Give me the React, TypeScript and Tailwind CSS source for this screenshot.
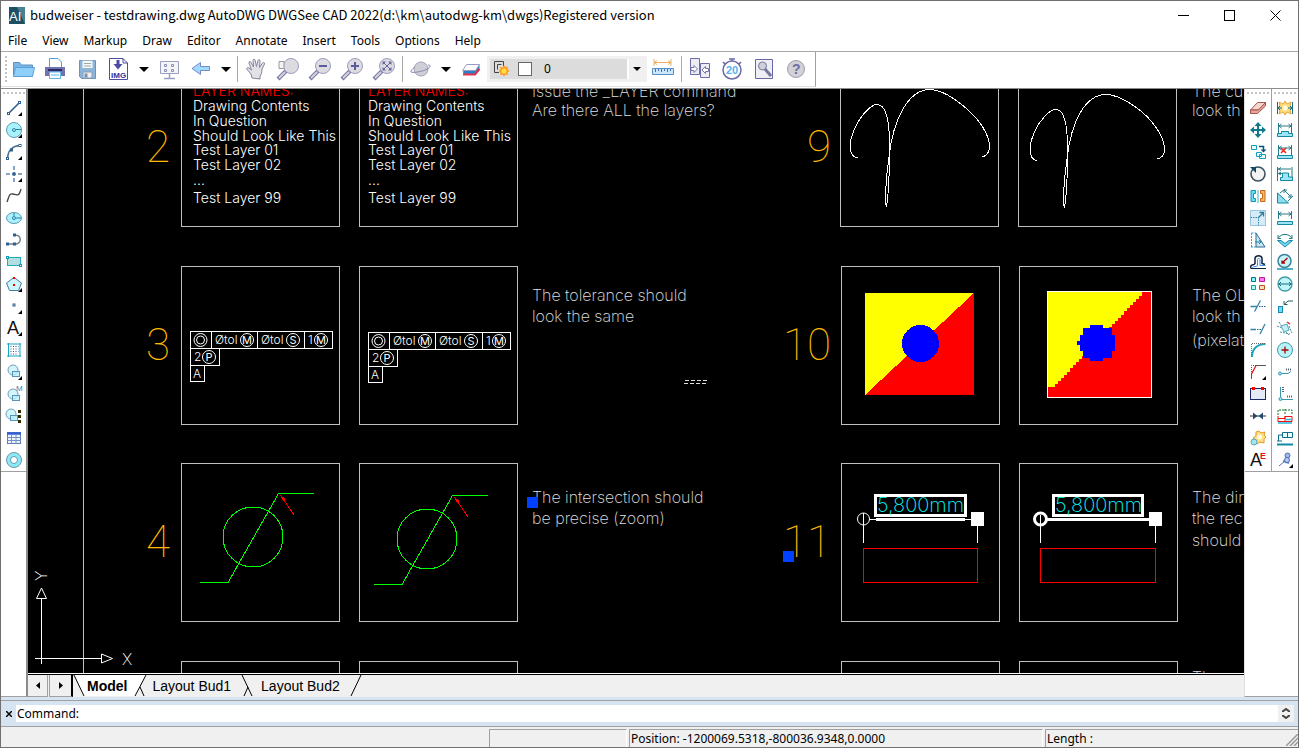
import React from 'react';

interface Tool {
  name: string;
  icon: React.ReactNode;
}

const Corner = () => <path d="M18 14v4h-4z" fill="#000" />;

const Node = ({ x, y }: { x: number; y: number }) => (
  <rect x={x - 1} y={y - 1} width="2" height="2" fill="#fff" stroke="#2f6090" />
);

const Shapes = () => (
  <>
    <circle cx="9" cy="8" r="5" fill="#d2f4fb" stroke="#6f9fbe" />
    <rect x="8.500" y="9.500" width="7" height="5" fill="#b9f0fb" fillOpacity=".8" stroke="#5b93b8" />
  </>
);

const drawTools: Tool[] = [
  { name: 'Line', icon: <><path d="M5 15L15 5" stroke="#2f6090" strokeWidth="1.6" /><Node x={4.5} y={15.5} /><Node x={15.5} y={4.5} /><Corner /></> },
  { name: 'Circle', icon: <><circle cx="10" cy="10" r="7.500" fill="#a8f2ff" stroke="#5f9db5" /><circle cx="10" cy="10" r="1.500" stroke="#2f7fa0" /><path d="M12 9.500h5" stroke="#2f7fa0" /><Corner /></> },
  { name: 'Arc', icon: <><path d="M3.500 16C4 9 8 4 16 3.500" stroke="#52728c" strokeWidth="1.5" /><Node x={3.5} y={16.5} /><Node x={7.5} y={8} /><Node x={16} y={3.5} /><Corner /></> },
  { name: 'Construction point', icon: <><path d="M10 2v16M2 10h16" stroke="#5b87b5" strokeWidth="1.5" strokeDasharray="4 2" /><rect x="8.500" y="8.500" width="3" height="3" fill="#2f6090" /><Corner /></> },
  { name: 'Spline', icon: <path d="M3 16C5 11 5 7 9 8s6 3 8-5" stroke="#444" strokeWidth="1.3" /> },
  { name: 'Ellipse', icon: <><ellipse cx="10" cy="10" rx="7.500" ry="5.500" fill="#a8f2ff" stroke="#5f9db5" /><circle cx="10" cy="10" r="1.500" stroke="#2f7fa0" /><path d="M10 5v3M12 10h5" stroke="#2f7fa0" /></> },
  { name: 'Polyline', icon: <><path d="M3 14h8c7 0 7-9 0-9" stroke="#6d7f8f" strokeWidth="1.5" /><Node x={3.5} y={14} /><Node x={10.5} y={14} /><Node x={10.5} y={5} /></> },
  { name: 'Rectangle', icon: <><rect x="3.500" y="5.500" width="13" height="8" fill="#b4dde2" stroke="#21aabf" /><rect x="2.500" y="4.500" width="2" height="2" fill="#fff" stroke="#0a9cb4" /><rect x="15.500" y="12.500" width="2" height="2" fill="#fff" stroke="#0a9cb4" /></> },
  { name: 'Polygon', icon: <><path d="M10 3.500l7.500 5.500-3 7.500h-9L2.500 9z" fill="#cdf5fb" stroke="#3b7fa3" /><path d="M9 3h2v2H9zM9 10h2v2H9z" fill="#f00" /><Corner /></> },
  { name: 'Point', icon: <><rect x="9" y="8" width="2" height="2" stroke="#2f6090" /><Corner /></> },
  { name: 'Text', icon: <><text x="3" y="16" fill="#111" fontSize="18" className="font-['Liberation_Sans']">A</text><Corner /></> },
  { name: 'Hatch', icon: <><path d="M3 4h14M3 16h14M4.500 3v14M16 3v14" stroke="#18a5bd" /><path d="M6.500 6.500h8M6.500 9h8M6.500 11.500h8M6.500 14h6" stroke="#1c5d9c" strokeDasharray="1 1.500" /></> },
  { name: 'Block', icon: <><Shapes /><Corner /></> },
  { name: 'Make block', icon: <><g transform="translate(0 2)"><Shapes /></g><text x="12" y="7" fill="#3c7fb0" fontSize="8" className="font-['Liberation_Sans']">M</text></> },
  { name: 'Block list', icon: <><g transform="translate(-2 0)"><Shapes /></g><path d="M14 4h3v3h-3zM14 9h3v3h-3zM14 14h3v3h-3z" fill="#332b00" /></> },
  { name: 'Table', icon: <><rect x="3.500" y="4.500" width="13" height="11" fill="#edf4ff" stroke="#5b79b8" /><path d="M3 5.500h14" stroke="#2f5fd0" strokeWidth="2.500" /><path d="M3 9.500h14M3 12.500h14M7.500 6v10M12 6v10" stroke="#7590c4" /></> },
  { name: 'Donut', icon: <><circle cx="10" cy="10" r="7.500" fill="#8ceaf8" stroke="#6799ae" /><circle cx="10" cy="10" r="3.500" fill="#fff" stroke="#6799ae" /></> },
];

const modifyTools: Tool[] = [
  { name: 'Erase', icon: <><path d="M2.500 12l7-7.500h8l-7 7.500z" fill="#f6d5cf" stroke="#a7574d" /><path d="M2.500 12v3.500h7l8-7.500V4.500l-7 7.500z" fill="#e6a59b" stroke="#a7574d" /></> },
  { name: 'Move', icon: <><path d="M10 4v12M4 10h12" stroke="#0f7a8c" strokeWidth="2" /><path d="M10 2l3.500 4h-7zM10 18l3.500-4h-7zM2 10l4-3.500v7zM18 10l-4-3.500v7z" fill="#0f7a8c" /></> },
  { name: 'Copy', icon: <><path d="M3.500 3.500h5v4h-5zM8.500 10.500h5v4h-5zM11.500 12.500h6v4h-6z" fill="#f0ffff" stroke="#11a2c0" /><path d="M11 4.500h4.500V8" stroke="#0d5472" strokeWidth="1.500" /><path d="M12.500 7.500h6l-3 3z" fill="#0d5472" /></> },
  { name: 'Rotate', icon: <><circle cx="10" cy="10" r="7" fill="#f3f3f3" stroke="#3c5262" strokeWidth="1.6" /><path d="M2 3h6v6z" fill="#0d4a60" /></> },
  { name: 'Mirror', icon: <><path d="M3 4.500h4.500v3h-2v5h2v3H3z" fill="#6adcf5" stroke="#1697b8" /><path d="M17 4.500h-4.500v3h2v5h-2v3H17z" fill="#ffb36a" stroke="#c56a14" /><path d="M10 4v13" stroke="#33b6c9" /></> },
  { name: 'Scale', icon: <><rect x="2.500" y="2.500" width="15" height="15" fill="#d7eaf8" stroke="#9cc4dd" /><path d="M2.500 9.500h8v8" stroke="#3c87a8" strokeDasharray="1.500 1" /><path d="M10 10l5-5M11.500 4.500h4v4" stroke="#287f9d" strokeWidth="1.300" /></> },
  { name: 'Stretch', icon: <><path d="M8 3l9 14H8z" fill="#c9e7f5" stroke="#2c6a92" /><path d="M3.500 3H8M3 17h6M3.500 3v14" stroke="#3a9dc0" strokeDasharray="2 1" /><path d="M7 12h5M11 10l2 2-2 2" stroke="#1f8aa5" /></> },
  { name: 'Offset', icon: <><path d="M3 16.500c-1-2 0-4 3-4l1-1V6c1-3 6-3 7 0v5.500l3 1" stroke="#11203a" strokeWidth="1.500" /><path d="M17.500 16.500H5c-1-1.500 0-2 3.500-2l1-1.500V7.500c.5-1.500 2-1.500 2.500 0v6h5.500" stroke="#3b8bf0" /><path d="M3 16.500h15" stroke="#11203a" /></> },
  { name: 'Array', icon: <><path d="M3.500 3.500h4v4h-4z" fill="#7ff" stroke="#0d6b94" /><path d="M11.500 3.500h5v4h-5z" fill="#f7f" stroke="#b3208b" /><path d="M3.500 11.500h4v4h-4z" fill="#aff" stroke="#0d9b94" /><path d="M11.500 11.500h5v4h-5z" fill="#fdb" stroke="#b35a20" /></> },
  { name: 'Trim', icon: <><path d="M2.500 10.500H9M6.500 15.500l6-11" stroke="#2d86a8" strokeWidth="1.300" /><path d="M11 10.500h7" stroke="#2f5f8a" strokeDasharray="1.500 1" /></> },
  { name: 'Extend', icon: <><path d="M2.500 11.500H8M12 16l5-10" stroke="#2d86a8" strokeWidth="1.300" /><path d="M9 11.500h5" stroke="#2f5f8a" strokeDasharray="1.500 1" /></> },
  { name: 'Fillet', icon: <><path d="M4 17C4 9 9 4 17.500 4" stroke="#22a5bf" strokeWidth="2" /><path d="M3.500 17V3.500H17" stroke="#666" strokeDasharray="1 1" /></> },
  { name: 'Chamfer', icon: <><path d="M3.500 17v-6M8 3.500h10" stroke="#555" /><path d="M3.500 10V3.500H8" stroke="#555" strokeDasharray="1 1" /><path d="M3.500 12L8 3.500" stroke="#e11" strokeWidth="1.300" /><Corner /></> },
  { name: 'Break', icon: <><rect x="2.500" y="4.500" width="15" height="11" fill="#e4ebf7" stroke="#1b2a66" /><path d="M4 3h3v3H4zM13 3h3v3h-3z" fill="#f00" /></> },
  { name: 'Join', icon: <><path d="M2 10h16" stroke="#333" /><path d="M5 6.500l4.500 3.500L5 13.500zM15 6.500L10.500 10l4.500 3.500z" fill="#27496b" /></> },
  { name: 'Explode', icon: <><path d="M11 3l2 2 4-1-1 3 2 2-2 2 0 4-4-1-3 2-1-4-3-2 3-2 0-4z" fill="#ffdf87" stroke="#e09a28" /><circle cx="11.500" cy="9" r="2.500" fill="#fffbe0" /><circle cx="6" cy="14" r="3" fill="#a4e3ea" stroke="#5ba9b8" /></> },
  { name: 'Edit text', icon: <><text x="2" y="16" fill="#111" fontSize="18" className="font-['Liberation_Sans']">A</text><text x="12" y="9" fill="#e11" fontSize="9" className="font-['Liberation_Sans'] font-bold">E</text></> },
];

const Ends = () => (
  <path d="M3.500 3v13M16.500 3v13M4 6h12M6.500 4L4 6l2.500 2M13.500 4L16 6l-2.500 2" stroke="#247b86" />
);

const Bar = () => <path d="M2.500 13.500h15v3h-15z" fill="#9ce6f5" stroke="#1587a3" />;

const dimensionTools: Tool[] = [
  { name: 'Quick dimension', icon: <><path d="M10 3l2 3 4-2-1 4 3 2-3 2 1 4-4-2-2 3-2-3-4 2 1-4-3-2 3-2-1-4 4 2z" fill="#ffdc7d" stroke="#e6a437" /><circle cx="10" cy="10" r="2.500" fill="#fffbe0" /><path d="M2.500 4v12M17.500 4v12M3 10h4M13 10h4M5 8l-2 2 2 2M15 8l2 2-2 2" stroke="#126f85" /></> },
  { name: 'Linear dimension', icon: <><Ends /><path d="M2.500 13.500h4v-2h7v2h4v3h-15z" fill="#9ce6f5" stroke="#1587a3" /></> },
  { name: 'Remove dimension', icon: <><Ends /><Bar /><path d="M6 6l5 5M11 6l-5 5" stroke="#e22" strokeWidth="1.500" /></> },
  { name: 'Baseline dimension', icon: <><path d="M2.500 3v14M17 3v12M3 5h13M3 9.500h8M6 8L3.500 9.500 6 11M6 3.500L3.500 5 6 6.500" stroke="#247b86" /><path d="M7.500 11v-2h6v4h4v3.500h-12v-3h2z" fill="#9ce6f5" stroke="#1587a3" /></> },
  { name: 'Aligned dimension', icon: <><path d="M2.500 7v10h11z" fill="#8ddcf0" stroke="#1587a3" /><path d="M5 7l5-4M13 15l5-5M9 4l7 7M9 7V4h3M13 11h3V8" stroke="#247b86" /></> },
  { name: 'Span dimension', icon: <><path d="M3.500 3v8M16.500 3v8M4 6h12M6.500 4L4 6l2.500 2M13.500 4L16 6l-2.500 2" stroke="#247b86" /><Bar /></> },
  { name: 'Angular dimension', icon: <><path d="M2.500 10.500h3.500l4 3 4-3h3.500L10 17z" fill="#6fdcf3" stroke="#1587a3" /><path d="M3 8.500C6 3 14 3 17 8.500M3 5v3.500h3M17 5v3.500h-3" stroke="#247b86" /></> },
  { name: 'Radius', icon: <><circle cx="9.500" cy="9" r="6.500" fill="#c9f4fa" stroke="#3d8298" strokeWidth="1.500" /><path d="M12.500 6L7 11M7 8.500V11h3" stroke="#a00" strokeWidth="1.300" /><path d="M2 17h16" stroke="#1697b8" strokeWidth="1.500" /></> },
  { name: 'Diameter', icon: <><circle cx="10" cy="10" r="7" fill="#c0f4f7" stroke="#429aa8" strokeWidth="1.300" /><path d="M3 10h14M6 8l-2 2 2 2M14 8l2 2-2 2" stroke="#156f83" /></> },
  { name: 'Ordinate', icon: <><rect x="3.500" y="10.500" width="4" height="6" fill="#72dffa" stroke="#138ab0" /><path d="M9 8.500l4-3.500h5M9 5v3.500h3.500" stroke="#245c66" /></> },
  { name: 'Jogged', icon: <><path d="M2 8l5 2M5 14l10 2M4 4l3 5M11 14l3 3M14 8l3 7" stroke="#4790a5" strokeDasharray="2 1" /><path d="M6 8l6-2 2 6-5 2z" fill="#c5eef5" stroke="#5ba9b8" /><path d="M12 4l3 2" stroke="#e22" strokeWidth="1.500" /></> },
  { name: 'Center mark', icon: <><circle cx="10" cy="10" r="7.500" fill="#b5f5fa" stroke="#4796a8" /><path d="M10 6.500v7M6.500 10h7" stroke="#a00" strokeWidth="1.300" /></> },
  { name: 'Leader', icon: <><circle cx="5" cy="11.500" r="1.500" fill="#9ce6f5" stroke="#3796ad" /><path d="M7 11.500h6l3-2" stroke="#3796ad" /><path d="M11 7.500h6" stroke="#567" strokeDasharray="1 1" strokeWidth="2" /></> },
  { name: 'Ordinate leader', icon: <><path d="M5.500 3v10M7 15.500h11" stroke="#3796ad" /><circle cx="5.500" cy="15" r="1.500" fill="#9ce6f5" stroke="#3796ad" /><path d="M8 3v6M12 12.500h6" stroke="#567" strokeDasharray="1 1" strokeWidth="2" /></> },
  { name: 'Tolerance', icon: <><path d="M3 9V4h14v5M10 3v6" stroke="#177a2a" strokeDasharray="2 1" /><path d="M3 12.500h7v-2h7v5M3 10v6M10 10v6M3 15.500h14" stroke="#e11" /><path d="M3 17h14M11 13.500h6" stroke="#26b6db" strokeWidth="1.500" /></> },
  { name: 'Edit dimension', icon: <><path d="M7.500 4.500h10v5h-10zM12.500 4.500v5M7 7H3.500v6M2 13h5" fill="#e8ffff" stroke="#0f6d85" /><path d="M2 16.500h16" stroke="#0f8aa5" strokeWidth="2" /></> },
  { name: 'Dimension style', icon: <><path d="M4 16l6-5" stroke="#5c79b9" /><path d="M8 11l6 2" stroke="#6483c5" strokeWidth="2" /><circle cx="12.500" cy="5.500" r="2.500" fill="#9db7ee" stroke="#4f6db4" /><circle cx="12" cy="10" r="2.500" fill="#b9cdf4" stroke="#4f6db4" /><Corner /></> },
];

const ToolColumn = ({ label, tools, width }: { label: string; tools: Tool[]; width: string }) => (
  <div role="toolbar" aria-label={label} className={`flex flex-col items-center border-b border-[#a0a0a0] bg-white ${width}`}>
    <div className="my-[3px] h-0 w-[22px] border-t-2 border-dotted border-[#c4c4c4]" />
    {tools.map((tool) => (
      <button key={tool.name} aria-label={tool.name} className="flex h-[22px] w-6 items-center justify-center">
        <svg width="20" height="20" viewBox="0 0 20 20" fill="none">{tool.icon}</svg>
      </button>
    ))}
  </div>
);

const MainTool = ({ label, children }: { label: string; children: React.ReactNode }) => (
  <button aria-label={label} className="flex w-8 shrink-0 items-center justify-center">
    <svg width="24" height="24" viewBox="0 0 24 24" fill="none">{children}</svg>
  </button>
);

const Drop = ({ label }: { label: string }) => (
  <button aria-label={label} className="flex w-[18px] shrink-0 items-center justify-center">
    <svg width="10" height="5" viewBox="0 0 10 5"><path d="M0 0h10L5 5z" /></svg>
  </button>
);

const Divider = () => <div className="mx-[2px] my-1 w-px shrink-0 bg-[#a8a8a8]" />;

const Lens = () => (
  <>
    <path d="M2 22l8-8" stroke="#7a7aa8" strokeWidth="4" />
    <path d="M3 21l6-6" stroke="#d4d4e4" strokeWidth="2" />
    <circle cx="15" cy="9" r="7.500" fill="#dcdce0" stroke="#9c9cc0" />
  </>
);

const MainToolbar = () => (
  <div className="flex h-[37px] shrink-0 border-b border-[#8c8c8c] bg-white">
    <div role="toolbar" aria-label="Standard" className="flex h-[35px] border-r border-b border-[#a0a0a0] border-b-[#e0e0e0] pr-[3px]">
      <div className="my-1 ml-1 w-0 border-l-2 border-dotted border-[#c4c4c4]" />
      <MainTool label="Open">
        <path d="M2.500 19V5.500h6l2 2.500h11v11z" fill="#79b5e6" stroke="#5c93c4" />
        <path d="M2.500 19.500l2-9h19l-2 9z" fill="#8fd0fa" stroke="#5d9fd2" />
      </MainTool>
      <MainTool label="Print">
        <path d="M6.500 11V1.500H15l3.500 3.500v6" fill="#fff" stroke="#4da2dd" />
        <path d="M2 10h20v9H2z" fill="#6f73ae" />
        <path d="M5 13h14" stroke="#2c2d66" strokeWidth="2" />
        <path d="M6.500 15h11v6.500h-11z" fill="#fff" stroke="#5fb5e8" />
        <path d="M8 18h8" stroke="#5fb5e8" />
      </MainTool>
      <MainTool label="Save">
        <path d="M4.500 3.500h16v18h-14l-2-2z" fill="#8bb4dc" stroke="#6b92bb" />
        <path d="M7 3.500h11v8H7z" fill="#f4f8fb" stroke="#9db5cb" />
        <path d="M9 6.500h7M9 9h7" stroke="#9aa" />
        <path d="M8 15h9v6H8z" fill="#efefef" stroke="#8b9db0" />
        <path d="M9.500 16.500h3v4h-3z" fill="#7a94b0" />
      </MainTool>
      <MainTool label="Save as image">
        <path d="M2.500 1.500H16l4.500 4.500v16.500h-18z" fill="#fff" stroke="#4d4da0" />
        <path d="M16 1.500V6h4.500" stroke="#4d4da0" />
        <path d="M11 3v5" stroke="#4d4da0" strokeWidth="3" />
        <path d="M6.500 7h9L11 12.500z" fill="#4d4da0" />
        <text x="4" y="21" fill="#30309a" fontSize="8" className="font-['Liberation_Sans'] font-bold">IMG</text>
      </MainTool>
      <Drop label="Save options" />
      <MainTool label="Full screen">
        <path d="M3.500 4.500h18v12h-18z" fill="#f5f5f8" stroke="#9aa0bf" />
        <path d="M7.500 7.500h2v2h-2zM14.500 7.500h2v2h-2zM7.500 12.500h2v2h-2zM14.500 12.500h2v2h-2z" stroke="#8a90b3" />
        <path d="M12.500 17v4M7 21.500h11" stroke="#9aa0bf" strokeWidth="1.500" />
      </MainTool>
      <MainTool label="Back"><path d="M3 11.500L11.500 5.500v4h9v4h-9v4z" fill="#9fd9fb" stroke="#7589c9" /></MainTool>
      <Drop label="View history" />
      <Divider />
      <MainTool label="Pan">
        <path d="M8 21l-1-4-4-4.500c-1-1.500 1-2.500 2-1.500L7.500 13 5 6c-.500-1.700 1.500-2 2-.700L9.500 10 9 3.500c0-1.700 2-1.700 2.200 0L12.500 9.500 14 3.500c.500-1.500 2.300-1 2 .5L15.500 10.500 18.500 6c1-1.300 2.500-.3 2 1L18 12c0 4-1 6-2 7v3z" fill="#e2e2e6" stroke="#83839f" />
      </MainTool>
      <MainTool label="Zoom window"><Lens /><path d="M3 4.500h5v7H3z" fill="#f3f3f3" stroke="#999" /></MainTool>
      <MainTool label="Zoom out"><Lens /><path d="M11 9h8" stroke="#5c5c9c" strokeWidth="2" /></MainTool>
      <MainTool label="Zoom in"><Lens /><path d="M11 9h8M15 5v8" stroke="#5c5c9c" strokeWidth="2" /></MainTool>
      <MainTool label="Zoom extents">
        <Lens />
        <path d="M11.500 5.500l7 7M18.500 5.500l-7 7" stroke="#6464a0" />
        <path d="M10.500 8V4.500H14zM19.500 8V4.500H16zM10.500 10v3.500H14zM19.500 10v3.500H16z" fill="#6464a0" />
      </MainTool>
      <Divider />
      <MainTool label="Orbit">
        <circle cx="12" cy="12" r="7" fill="#cfcfd8" stroke="#a3a3b8" />
        <path d="M6 10c-3 2-4.500 4-4 5s12 0 17-3.500c3-2 3-3.500 0-3.500" stroke="#8989ac" />
      </MainTool>
      <Drop label="Orbit options" />
      <MainTool label="Eraser">
        <path d="M4 15l4-7h12.500v5l-4 5H5z" fill="#2d7fc5" />
        <path d="M4 17.500h12l4.500-5.500" stroke="#e0344c" strokeWidth="2" />
        <path d="M3.500 13.500l4-6h13l-4 6z" fill="#fff" stroke="#9c9cc0" />
      </MainTool>
      <div className="relative my-1 w-[160px] shrink-0 border-[3px] border-[#f0f0f0] bg-[#dcdcdc]">
        <select aria-label="Layer" className="h-full w-full appearance-none pl-[54px] text-xs outline-none" defaultValue="0">
          <option value="0">0</option>
        </select>
        <div className="pointer-events-none absolute inset-0 flex items-center gap-2 pl-1">
          <svg width="16" height="18" viewBox="0 0 16 18" fill="none">
            <path d="M.5 12.500V1.500h9v5M3.500 9.500v-5h4" stroke="#444" />
            <path d="M.5 12.500H5" stroke="#444" />
            <path d="M10 5l1.500 2 2.500-.5-.5 2.500 2 2-2 1.500.5 2.500-2.500-.5L10 16.500 8.500 14.500 6 15l.5-2.500L4.500 11l2-1.500L6 7l2.500.5z" fill="#ff9b21" />
            <circle cx="10" cy="11" r="2.500" fill="#ffe23d" />
          </svg>
          <span className="h-[14px] w-[14px] border border-[#666] bg-white" />
        </div>
        <div className="pointer-events-none absolute inset-y-0 right-0 flex w-[17px] items-center justify-center border-l-2 border-white bg-[#f0f0f0]">
          <svg width="8" height="4" viewBox="0 0 8 4"><path d="M0 0h8L4 4z" /></svg>
        </div>
      </div>
      <MainTool label="Measure">
        <path d="M3 2v7M20 2v7M3 5.500h17M6 3.500l-3 2 3 2M17 3.500l3 2-3 2" stroke="#ecb368" />
        <path d="M1.500 11.500h21v6h-21z" fill="#c9e6fa" stroke="#5a8fc5" />
        <path d="M4.500 12v3M7.500 12v2M10.500 12v3M13.500 12v2M16.500 12v3M19.500 12v2" stroke="#3e6fae" />
      </MainTool>
      <Divider />
      <MainTool label="Compare">
        <path d="M2.500 1.500h9v16h-9zM12.500 6.500h9v14h-9z" fill="#ececf2" stroke="#6c6ca8" />
        <path d="M3 10.500h3V8.500l3.500 3.500L6 15.500v-2H3zM20.500 11.500h-3v-2L14 13l3.500 3.500v-2h3z" fill="#fff" stroke="#7777b0" />
      </MainTool>
      <MainTool label="Version">
        <circle cx="12" cy="13" r="9" fill="#fff" stroke="#6a6aa5" strokeWidth="1.500" />
        <path d="M9 2h6M12 2v2M3 5l2 2M21 5l-2 2" stroke="#6a6aa5" strokeWidth="1.500" />
        <text x="6" y="17" fill="#58b4ec" fontSize="11" className="font-['Liberation_Sans'] font-bold">20</text>
      </MainTool>
      <MainTool label="Find">
        <path d="M3.500 2.500h17v19h-17z" fill="#eeeef4" stroke="#6868a4" />
        <circle cx="10.500" cy="9" r="4" fill="#d0d0d8" stroke="#77a" />
        <path d="M13 12l6 7" stroke="#77779c" strokeWidth="3" />
      </MainTool>
      <MainTool label="Help">
        <circle cx="12" cy="12" r="8.500" fill="#d1d1d6" stroke="#9c9cb4" />
        <text x="8" y="17" fill="#6d6da2" fontSize="14" className="font-['Liberation_Sans'] font-bold">?</text>
      </MainTool>
    </div>
  </div>
);

const note = "font-['Inter','DejaVu_Sans',sans-serif] font-extralight text-[16px]";
const small = "font-['Inter','DejaVu_Sans',sans-serif] font-light text-[14px]";
const mini = "font-['Inter','DejaVu_Sans',sans-serif] font-light text-[12px]";
const sheet = "font-['Roboto','DejaVu_Sans',sans-serif] font-thin text-[44px]";

const frames = [
  [181, 68], [359, 68], [840, 68], [1018, 68],
  [181, 266], [359, 266], [841, 266], [1019, 266],
  [181, 463], [359, 463], [841, 463], [1019, 463],
  [181, 661], [359, 661], [841, 661], [1019, 661],
];

const numbers: [number, number, string][] = [
  [146, 162, '2'], [146, 360, '3'], [146, 557, '4'],
  [807, 162, '9'], [783, 360, '10'], [783, 557, '11'],
];

const notes: [number, number, string][] = [
  [532, 97, 'Issue the _LAYER command'],
  [532, 116, 'Are there ALL the layers?'],
  [532, 301, 'The tolerance should'],
  [532, 322, 'look the same'],
  [532, 503, 'The intersection should'],
  [532, 524, 'be precise (zoom)'],
  [1192, 97, 'The cu'],
  [1192, 116, 'look th'],
  [1192, 301, 'The OL'],
  [1192, 322, 'look th'],
  [1192, 346, '(pixelat'],
  [1192, 503, 'The dim'],
  [1192, 524, 'the rec'],
  [1192, 546, 'should'],
  [1192, 683, 'Th'],
];

const layers: [number, string][] = [
  [111, 'Drawing Contents'],
  [126, 'In Question'],
  [141, 'Should Look Like This'],
  [155, 'Test Layer 01'],
  [170, 'Test Layer 02'],
  [185, '...'],
  [203, 'Test Layer 99'],
];

const LayerList = ({ x }: { x: number }) => (
  <g className={small} fill="#fff">
    <text x={x} y={96} fill="#f00">LAYER NAMES:</text>
    {layers.map(([y, text]) => <text key={text} x={x} y={y}>{text}</text>)}
  </g>
);

const Symbol = ({ x, y, letter }: { x: number; y: number; letter: string }) => (
  <>
    <circle cx={x} cy={y} r="6.5" />
    <text x={x} y={y + 4} textAnchor="middle" fill="#fff" stroke="none" className="font-['Inter',sans-serif] text-[11px]">{letter}</text>
  </>
);

const Tolerance = ({ x, y }: { x: number; y: number }) => (
  <g transform={`translate(${x} ${y})`} stroke="#fff" fill="none">
    <path d="M.5 .5h142v17H.5zM21.500 .5v17M67.500 .5v17M114.500 .5v17M.5 17.500v17h29v-17M.5 34.500v16h14v-16" shapeRendering="crispEdges" />
    <circle cx="10.500" cy="9" r="6.500" />
    <circle cx="10.500" cy="9" r="4" />
    <g className={mini} fill="#fff" stroke="none">
      <text x="25" y="13">Øtol</text>
      <text x="71" y="13">Øtol</text>
      <text x="118" y="13">1</text>
      <text x="4" y="30">2</text>
      <text x="3" y="47">A</text>
    </g>
    <Symbol x={57} y={9} letter="M" />
    <Symbol x={103} y={9} letter="S" />
    <Symbol x={131} y={9} letter="M" />
    <Symbol x={19} y={26} letter="P" />
  </g>
);

const Intersection = ({ x, y }: { x: number; y: number }) => (
  <g transform={`translate(${x} ${y})`} fill="none" shapeRendering="crispEdges">
    <circle cx="53" cy="44" r="30" stroke="#0f0" />
    <path d="M0 89.500h28L78.500 .5H114" stroke="#0f0" />
    <path d="M94 22L81 3" stroke="#f00" />
    <path d="M80 2l6 4-3 2z" fill="#f00" />
  </g>
);

// red half of the low resolution picture
const steps = Array.from({ length: 30 }, (_, i) => `h-3v${i % 6 === 0 ? 4 : 3}`).join('');

const Drawing = () => (
  <svg role="img" aria-label="Drawing" className="absolute inset-0 h-full w-full">
    <g transform="translate(-28 -89)">
      <path d="M83.500 80v700" stroke="#c0c0c0" />
      {frames.map(([x, y]) => (
        <rect key={`${x}-${y}`} x={x + 0.5} y={y + 0.5} width="158" height="158" fill="none" stroke="#c0c0c0" />
      ))}
      <g className={sheet} fill="#ffb900">
        {numbers.map(([x, y, text]) => <text key={text} x={x} y={y}>{text}</text>)}
      </g>
      <g className={note} fill="#e0e0e0">
        {notes.map(([x, y, text]) => <text key={`${x}-${y}`} x={x} y={y}>{text}</text>)}
      </g>
      <LayerList x={193} />
      <LayerList x={368} />
      <Tolerance x={190} y={331} />
      <Tolerance x={368} y={332} />
      <Intersection x={200} y={493} />
      <Intersection x={374} y={495} />
      <path d="M685 380.500h22M684 383.500h22" stroke="#ddd" strokeDasharray="4 2" />

      <g fill="none" stroke="#fff" shapeRendering="crispEdges">
        <path d="M857.500 158C848 156 849 142 854 130S870 104.500 877 104.500C887 104.500 889.500 125 889.500 145 889.500 170 888.500 195 886.500 206 884.500 206 885.500 180 889 157 893 120 908 89.500 930 89.500 945 89.500 965 106 976 118 986 130 989.500 138 989.500 146 989.500 153 987 156 982 157" />
        <path d="M1036.500 161C1028 158 1029 145 1034 133S1049 109.500 1056 109.500C1065 109.500 1067.500 128 1067.500 148 1067.500 172 1066.500 197 1064.500 207 1062.500 207 1063.500 182 1067 159 1071 122 1085 94.500 1106 94.500 1120 94.500 1141 109 1152 122 1161 133 1164.500 141 1164.500 149 1164.500 155 1162 158 1157 159" />
      </g>

      <g shapeRendering="crispEdges">
        <rect x="865" y="293" width="109" height="102" fill="#ff0" />
        <path d="M974 293v102H865z" fill="#f00" />
        <circle cx="920.500" cy="343.500" r="18.500" fill="#00f" />
        <rect x="1047.500" y="291.500" width="104" height="106" fill="#ff0" stroke="#fff" />
        <path d={`M1151 397V292h-6${steps}H1048V397z`} fill="#f00" />
        <path d="M1090 325h13v3h9v7h3v16h-3v7h-9v3h-13v-3h-7v-7h-3v-6h-3v-4h3v-6h3v-7h7z" fill="#00f" />
      </g>

      <g fill="none" stroke="#fff">
        <rect x="875.500" y="495.500" width="90" height="20" strokeWidth="3" />
        <circle cx="863.500" cy="519" r="6" />
        <path d="M863.500 513v30M977.500 526v17M869 519.500h104" />
        <path d="M876 519.500h89" strokeWidth="3" />
        <rect x="971" y="512" width="13" height="14" fill="#fff" stroke="none" />
        <rect x="1053.500" y="495.500" width="89" height="20" strokeWidth="3" />
        <circle cx="1040.500" cy="519" r="6" strokeWidth="3" />
        <path d="M1040.500 515v28M1155.500 526v17" />
        <path d="M1047 519.500h103" strokeWidth="3" />
        <rect x="1149" y="512" width="13" height="14" fill="#fff" stroke="none" />
        <path d="M863.500 548.500h114v34h-114zM1040.500 548.500h115v34h-115z" stroke="#f00" shapeRendering="crispEdges" />
      </g>
      <g fill="#0ff" className="font-['Inter','DejaVu_Sans',sans-serif] text-[20px] font-extralight">
        <text x="877" y="512">5,800mm</text>
        <text x="1055" y="512">5,800mm</text>
      </g>

      <path d="M527 497h11v11h-11zM783 551h11v11h-11z" fill="#0040ff" />

      {/* UCS axes */}
      <g fill="none" stroke="#fff">
        <path d="M41.500 598v66M35 658.500h66M41.500 588l-5 10.500h10zM101.500 654v9l11-4.500z" />
      </g>
      <g fill="#fff" className="font-['Inter','DejaVu_Sans',sans-serif] text-[16px] font-extralight">
        <text x="122" y="665">X</text>
        <text transform="translate(47 581) rotate(-90)">Y</text>
      </g>
    </g>
  </svg>
);

const menus = ['File', 'View', 'Markup', 'Draw', 'Editor', 'Annotate', 'Insert', 'Tools', 'Options', 'Help'];

const Slant = ({ children }: { children: React.ReactNode }) => (
  <svg width="20" height="21" viewBox="0 0 20 21" className="shrink-0" fill="none" stroke="#000">{children}</svg>
);

const LayoutTabs = () => (
  <div className="flex h-[23px] shrink-0 border-t border-black bg-[#f0f0f0] font-['Liberation_Sans',sans-serif] text-sm">
    <button aria-label="Previous layout" className="flex w-5 items-center justify-center border-r border-b border-[#a0a0a0]">
      <svg width="4" height="7" viewBox="0 0 4 7"><path d="M4 0v7L0 3.500z" /></svg>
    </button>
    <button aria-label="Next layout" className="ml-px flex w-6 items-center justify-center border-r-2 border-b border-l border-[#a0a0a0] border-r-black">
      <svg width="4" height="7" viewBox="0 0 4 7"><path d="M0 0v7l4-3.500z" /></svg>
    </button>
    <div role="tablist" className="flex">
      <svg width="12" height="21" viewBox="0 0 12 21" className="shrink-0" fill="none" stroke="#000">
        <path d="M1 0h11v21h-1z" fill="#fff" stroke="none" /><path d="M1 0l10 21" />
      </svg>
      <button role="tab" aria-selected="true" className="h-[21px] bg-white pr-[5px] pl-[2px] font-bold">Model</button>
      <Slant><path d="M0 0h14L4 21H0z" fill="#fff" stroke="none" /><path d="M14 0L3 21M8 12l4 9" /></Slant>
      <button role="tab" aria-selected="false" className="h-[21px] pr-[10px]">Layout Bud1</button>
      <Slant><path d="M1 0l10 21M7 12L3 21" /></Slant>
      <button role="tab" aria-selected="false" className="h-[21px] pr-[10px]">Layout Bud2</button>
      <Slant><path d="M11 0L1 21" /></Slant>
    </div>
  </div>
);

const StatusCell = ({ className, children }: { className: string; children?: React.ReactNode }) => (
  <div className={`h-[18px] border-t border-l border-[#a0a0a0] pl-px leading-[17px] ${className}`}>{children}</div>
);

export default function App() {
  return (
    <div className="flex h-screen flex-col overflow-hidden border border-[#707070] bg-white font-['Noto_Sans',sans-serif] text-xs text-black">
      <header className="flex h-[29px] shrink-0 items-center">
        <svg width="16" height="17" viewBox="0 0 16 17" className="ml-2 shrink-0">
          <rect width="16" height="17" fill="#1e4f63" />
          <path d="M8 0h8v17z" fill="#4b8292" />
          <text x="0" y="14" fill="#fff" fontSize="13" className="font-['Liberation_Sans']">AI</text>
        </svg>
        <h1 className="ml-[5px] pb-[2px] font-['Noto_Sans_CJK_SC',sans-serif] text-[13px]">budweiser - testdrawing.dwg AutoDWG DWGSee CAD 2022(d:\km\autodwg-km\dwgs)Registered version</h1>
        <div className="ml-auto flex h-full">
          <button aria-label="Minimize" className="flex w-[46px] items-center justify-center">
            <svg width="11" height="11" viewBox="0 0 11 11"><path d="M0 5.500h11" stroke="#000" /></svg>
          </button>
          <button aria-label="Maximize" className="flex w-[46px] items-center justify-center">
            <svg width="11" height="11" viewBox="0 0 11 11"><rect x=".5" y=".5" width="10" height="10" fill="none" stroke="#000" /></svg>
          </button>
          <button aria-label="Close" className="flex w-[46px] items-center justify-center">
            <svg width="11" height="11" viewBox="0 0 11 11"><path d="M.5 .5l10 10M10.500 .5l-10 10" stroke="#000" /></svg>
          </button>
        </div>
      </header>

      <nav className="flex h-[22px] shrink-0 items-center gap-[15px] border-b border-[#a8a8a8] pl-[7px]">
        {menus.map((menu) => <button key={menu}>{menu}</button>)}
      </nav>

      <MainToolbar />

      <main className="flex min-h-0 flex-1">
        <aside className="flex w-[27px] shrink-0 flex-col border-r-2 border-b border-[#8c8c8c] border-b-[#a0a0a0]">
          <ToolColumn label="Draw" tools={drawTools} width="w-[25px]" />
        </aside>
        <section className="flex min-w-0 flex-1 flex-col">
          <div className="relative flex-1 overflow-hidden bg-black">
            <Drawing />
          </div>
          <div className="h-px bg-white" />
          <LayoutTabs />
        </section>
        <aside className="flex shrink-0 items-start border-b border-l border-[#e0e0e0] border-b-[#a0a0a0]">
          <ToolColumn label="Modify" tools={modifyTools} width="w-[26px]" />
          <div className="h-[383px] w-px bg-[#a0a0a0]" />
          <ToolColumn label="Dimension" tools={dimensionTools} width="w-[26px]" />
        </aside>
      </main>

      <div className="flex h-[30px] shrink-0 flex-col border-b border-[#a0a0a0] bg-[#d6e3f1]">
        <div className="mt-[3px] h-px bg-[#a0a0a0]" />
        <div className="mt-1 flex h-[17px] items-center">
          <button aria-label="Close command line" className="flex w-[15px] items-center justify-center">
            <svg width="6" height="6" viewBox="0 0 6 6"><path d="M0 0l6 6M6 0L0 6" stroke="#000" strokeWidth="1.5" /></svg>
          </button>
          <input aria-label="Command line" defaultValue="Command:" className="h-full min-w-0 flex-1 bg-white px-px outline-none" />
          <div className="mr-1 flex h-full w-4 flex-col items-center justify-between bg-[#f0f0f0] py-[3px]">
            <svg width="8" height="4" viewBox="0 0 8 4" fill="none"><path d="M0 4l4-3 4 3" stroke="#444" strokeWidth="2" /></svg>
            <svg width="8" height="4" viewBox="0 0 8 4" fill="none"><path d="M0 0l4 3 4-3" stroke="#444" strokeWidth="2" /></svg>
          </div>
        </div>
      </div>

      <footer className="flex h-5 shrink-0 items-end gap-[2px] bg-[#f0f0f0]">
        <div className="flex-1" />
        <StatusCell className="w-[138px] border-r border-r-white" />
        <StatusCell className="w-[414px] border-r border-r-white">Position: -1200069.5318,-800036.9348,0.0000</StatusCell>
        <StatusCell className="flex w-[253px] justify-between">
          Length :
          <svg width="12" height="12" viewBox="0 0 12 12" className="mt-1"><path d="M0 12L12 0M4 12l8-8M8 12l4-4" stroke="#999" strokeWidth="1.500" /></svg>
        </StatusCell>
      </footer>
    </div>
  );
}
